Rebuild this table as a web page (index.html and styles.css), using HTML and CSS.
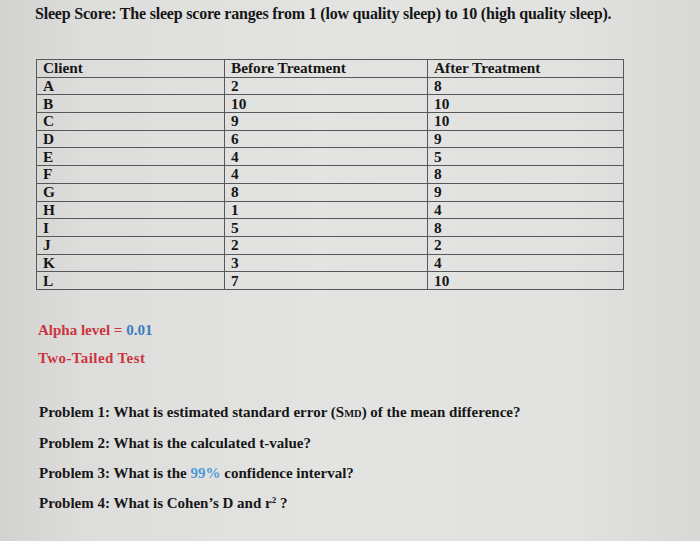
FILE: index.html
```html
<!DOCTYPE html>
<html>
<head>
<meta charset="utf-8">
<link rel="stylesheet" href="styles.css">
</head>
<body>
<div class="page">
  <p class="title">Sleep Score: The sleep score ranges from 1 (low quality sleep) to 10 (high quality sleep).</p>
  <table class="data">
    <tr><td class="c1">Client</td><td class="c2">Before Treatment</td><td class="c3">After Treatment</td></tr>
    <tr><td>A</td><td>2</td><td>8</td></tr>
    <tr><td>B</td><td>10</td><td>10</td></tr>
    <tr><td>C</td><td>9</td><td>10</td></tr>
    <tr><td>D</td><td>6</td><td>9</td></tr>
    <tr><td>E</td><td>4</td><td>5</td></tr>
    <tr><td>F</td><td>4</td><td>8</td></tr>
    <tr><td>G</td><td>8</td><td>9</td></tr>
    <tr><td>H</td><td>1</td><td>4</td></tr>
    <tr><td>I</td><td>5</td><td>8</td></tr>
    <tr><td>J</td><td>2</td><td>2</td></tr>
    <tr><td>K</td><td>3</td><td>4</td></tr>
    <tr><td>L</td><td>7</td><td>10</td></tr>
  </table>
  <div class="notes">
    <p class="note">Alpha level = <span class="blue">0.01</span></p>
    <p class="note spread">Two-Tailed Test</p>
  </div>
  <div class="problems">
    <p class="prob">Problem 1: What is estimated standard error (S<span class="sc">MD</span>) of the mean difference?</p>
    <p class="prob">Problem 2: What is the calculated t-value?</p>
    <p class="prob">Problem 3: What is the <span class="blue2">99%</span> confidence interval?</p>
    <p class="prob">Problem 4: What is Cohen’s D and r<sup class="sup">2</sup> ?</p>
  </div>
</div>
</body>
</html>
```

FILE: styles.css
```css
html, body {
  margin: 0;
  padding: 0;
}
body {
  width: 700px;
  height: 541px;
  overflow: hidden;
  background: linear-gradient(to right, #d2d2d0 0%, #dddddb 12%, #e3e4e1 45%, #e2e3e0 80%, #d8d9d6 100%);
  font-family: "Liberation Serif", "Times New Roman", serif;
  font-weight: bold;
  color: #161616;
}
.page {
  padding: 5px 0 0 35px;
}
.title {
  margin: 0;
  font-size: 16px;
  line-height: 18px;
  letter-spacing: -0.2px;
}
.data {
  margin-top: 36px;
  margin-left: 1px;
  border-collapse: collapse;
  width: 588px;
  border: 1px solid #4c4c4c;
}
.data td {
  border: 1px solid #585858;
  padding: 0 0 0 6px;
  height: 16.7px;
  font-size: 15.3px;
  line-height: 16px;
  vertical-align: middle;
}
.c1 { width: 181px; }
.c2 { width: 196px; }
.notes {
  margin-top: 32px;
  margin-left: 3px;
}
.note {
  margin: 0 0 11px 0;
  font-size: 15px;
  line-height: 17px;
  color: #cc3540;
}
.spread { letter-spacing: 0.4px; }
.blue { color: #3c7ec2; }
.problems {
  margin-top: 37px;
  margin-left: 4px;
}
.prob {
  margin: 0 0 13px 0;
  font-size: 15px;
  line-height: 17px;
}
.sc { font-size: 10.5px; }
.blue2 { color: #4a9ad6; }
.sup { font-size: 9px; line-height: 0; vertical-align: 5px; }
```
